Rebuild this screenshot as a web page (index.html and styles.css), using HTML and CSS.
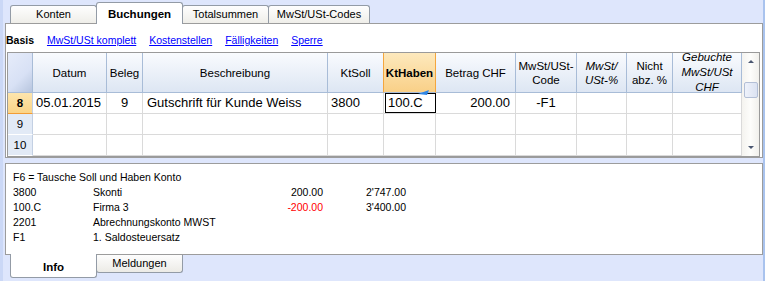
FILE: index.html
```html
<!DOCTYPE html>
<html lang="de">
<head>
    <meta charset="UTF-8">
    <title>Buchungen</title>
    <link rel="stylesheet" href="styles.css">
</head>
<body>
<div class="window">
    <div class="tabs-top">
        <div class="tab">Konten</div>
        <div class="tab active">Buchungen</div>
        <div class="tab">Totalsummen</div>
        <div class="tab wide">MwSt/USt-Codes</div>
    </div>

    <div class="panel main">
        <div class="views">
            <b>Basis</b>
            <a href="#">MwSt/USt komplett</a>
            <a href="#">Kostenstellen</a>
            <a href="#">Fälligkeiten</a>
            <a href="#">Sperre</a>
        </div>
        <div class="grid">
            <table>
                <colgroup>
                    <col class="c-num">
                    <col class="c-datum">
                    <col class="c-beleg">
                    <col class="c-beschr">
                    <col class="c-soll">
                    <col class="c-haben">
                    <col class="c-betrag">
                    <col class="c-code">
                    <col class="c-proz">
                    <col class="c-nicht">
                    <col class="c-gebucht">
                </colgroup>
                <thead>
                    <tr>
                        <th class="corner"><div class="hdr"></div></th>
                        <th><div class="hdr">Datum</div></th>
                        <th><div class="hdr">Beleg</div></th>
                        <th><div class="hdr">Beschreibung</div></th>
                        <th class="before-current"><div class="hdr">KtSoll</div></th>
                        <th class="current"><div class="hdr">KtHaben</div></th>
                        <th><div class="hdr">Betrag CHF</div></th>
                        <th><div class="hdr">MwSt/USt-<br>Code</div></th>
                        <th><div class="hdr italic">MwSt/<br>USt-%</div></th>
                        <th><div class="hdr">Nicht<br>abz. %</div></th>
                        <th><div class="hdr italic tall">Gebuchte<br>MwSt/USt<br>CHF</div></th>
                    </tr>
                </thead>
                <tbody>
                    <tr>
                        <td class="num selected">8</td>
                        <td>05.01.2015</td>
                        <td class="center">9</td>
                        <td class="wide-pad">Gutschrift für Kunde Weiss</td>
                        <td>3800</td>
                        <td class="edit"><div class="editor">100.C<svg class="hint" width="12" height="5" viewBox="0 0 12 5"><polygon points="0,4 11,0 9,5" fill="#2d86e6"/></svg></div></td>
                        <td class="right">200.00</td>
                        <td class="center">-F1</td>
                        <td></td>
                        <td></td>
                        <td></td>
                    </tr>
                    <tr>
                        <td class="num">9</td>
                        <td></td><td></td><td></td><td></td><td></td><td></td><td></td><td></td><td></td><td></td>
                    </tr>
                    <tr>
                        <td class="num">10</td>
                        <td></td><td></td><td></td><td></td><td></td><td></td><td></td><td></td><td></td><td></td>
                    </tr>
                </tbody>
            </table>
            <div class="vscroll">
                <div class="sb-btn"><span class="arrow-up"></span></div>
                <div class="sb-track"><div class="sb-thumb"></div></div>
                <div class="sb-btn"><span class="arrow-down"></span></div>
            </div>
        </div>
    </div>

    <div class="panel info">
        <div class="info-line full">F6 = Tausche Soll und Haben Konto</div>
        <div class="info-row">
            <span>3800</span><span>Skonti</span><span class="amt">200.00</span><span class="amt">2'747.00</span>
        </div>
        <div class="info-row">
            <span>100.C</span><span>Firma 3</span><span class="amt neg">-200.00</span><span class="amt">3'400.00</span>
        </div>
        <div class="info-row">
            <span>2201</span><span>Abrechnungskonto MWST</span><span></span><span></span>
        </div>
        <div class="info-row">
            <span>F1</span><span>1. Saldosteuersatz</span><span></span><span></span>
        </div>
    </div>

    <div class="tabs-bottom">
        <div class="btab active">Info</div>
        <div class="btab">Meldungen</div>
    </div>
</div>
</body>
</html>
```

FILE: styles.css
```css
body {
    margin: 0;
    background-color: #dee6fc;
    font-family: "Liberation Sans", Arial, sans-serif;
    font-size: 10.5px;
    color: #000;
}
.window {
    width: 765px;
    height: 281px;
    box-sizing: border-box;
    border-left: 3px solid #cbd8f6;
    border-right: 2px solid #a9c3ee;
    padding-left: 2px;
    overflow: hidden;
}

/* top tabs */
.tabs-top {
    display: flex;
    align-items: flex-end;
    height: 23px;
    padding-left: 5px;
    position: relative;
    z-index: 2;
}
.tab {
    width: 87px;
    height: 18px;
    box-sizing: border-box;
    margin-right: -1px;
    border: 1px solid #939ba6;
    border-bottom: none;
    border-radius: 3px 3px 0 0;
    background: linear-gradient(#fefefe, #efeee9);
    font-size: 11px;
    line-height: 17px;
    text-align: center;
}
.tab.wide {
    width: 102px;
}
.tab.active {
    height: 22px;
    margin-bottom: -1px;
    background: #fff;
    font-weight: bold;
    font-size: 11.5px;
    line-height: 23px;
    position: relative;
    z-index: 1;
}

/* panels */
.panel {
    width: 758px;
    box-sizing: border-box;
    border: 1px solid #9c9c9c;
    background-color: #fff;
}
.main {
    height: 135px;
}
.views {
    height: 28px;
    box-sizing: border-box;
    padding-top: 10px;
    line-height: 13px;
    white-space: nowrap;
}
.views a {
    color: #0000ff;
    margin-left: 10px;
}

/* grid */
.grid {
    display: flex;
    margin-left: 1px;
    width: 753px;
    height: 105px;
    box-sizing: border-box;
    border: 1px solid #9a9a9a;
    overflow: hidden;
}
table {
    width: 734px;
    flex: none;
    table-layout: fixed;
    border-collapse: separate;
    border-spacing: 0;
}
.c-num { width: 25px; }
.c-datum { width: 74px; }
.c-beleg { width: 36px; }
.c-beschr { width: 185px; }
.c-soll { width: 56px; }
.c-haben { width: 52px; }
.c-betrag { width: 80px; }
.c-code { width: 61px; }
.c-proz { width: 50px; }
.c-nicht { width: 46px; }
.c-gebucht { width: 69px; }

thead tr {
    height: 40px;
}
tbody tr {
    height: 21px;
}
th {
    padding: 0;
    font-weight: normal;
    font-size: 11.5px;
    line-height: 14px;
    border-right: 1px solid #a8bcd7;
    border-bottom: 1px solid #a8bcd7;
    background: linear-gradient(#f9fbfe, #dde6f3);
}
.hdr {
    height: 39px;
    display: flex;
    align-items: center;
    justify-content: center;
    text-align: center;
    overflow: hidden;
    white-space: nowrap;
}
.hdr.tall {
    line-height: 15px;
}
.italic {
    font-style: italic;
}
th.corner {
    background: linear-gradient(135deg, #e6ecfa 0%, #d8e1f5 60%, #b7c5de 100%);
}
th.before-current {
    border-right-color: #f4a63e;
}
th.current {
    font-weight: bold;
    border-right-color: #f4a63e;
    background: linear-gradient(#fde9bd, #f9d088);
}
td {
    padding: 0 3px;
    font-size: 13px;
    line-height: 20px;
    white-space: nowrap;
    overflow: hidden;
    border-right: 1px solid #dadada;
    border-bottom: 1px solid #dadada;
}
td.wide-pad {
    padding-left: 4px;
}
td.center {
    text-align: center;
}
td.right {
    text-align: right;
    padding-right: 5px;
}
td.num {
    padding: 0;
    text-align: center;
    font-size: 11.5px;
    background-color: #e2eaf6;
    border-right-color: #c3d0e3;
    border-bottom-color: #fff;
}
td.num.selected {
    font-weight: bold;
    background: linear-gradient(#fde5ad, #fbd487);
    border-bottom-color: #f29c35;
}
td.edit {
    padding: 0 0 0 1px;
    overflow: visible;
}
.editor {
    position: relative;
    width: 51px;
    height: 20px;
    box-sizing: border-box;
    border: 1px solid #000;
    padding-left: 2px;
    line-height: 18px;
}
.hint {
    position: absolute;
    top: -4px;
    right: 5px;
}

/* scrollbar */
.vscroll {
    width: 17px;
    flex: none;
    display: flex;
    flex-direction: column;
    background: linear-gradient(90deg, #f4f3ef, #fdfdfb 50%, #f1f0ec);
}
.sb-btn {
    height: 17px;
    display: flex;
    align-items: center;
    justify-content: center;
}
.arrow-up {
    border-left: 3px solid transparent;
    border-right: 3px solid transparent;
    border-bottom: 3px solid #4a5670;
}
.arrow-down {
    border-left: 3px solid transparent;
    border-right: 3px solid transparent;
    border-top: 3px solid #4a5670;
}
.sb-track {
    flex: 1;
}
.sb-thumb {
    margin: 12px 1px 0 2px;
    height: 16px;
    box-sizing: border-box;
    border: 1px solid #b3bfd6;
    border-radius: 2px;
    background: linear-gradient(90deg, #eef2fb, #dbe2f1);
}

/* info panel */
.info {
    margin-top: 5px;
    height: 92px;
    padding: 6px 0 0 7px;
    line-height: 15px;
}
.info-row {
    display: grid;
    grid-template-columns: 80px 160px 70px 83px;
    white-space: nowrap;
}
.amt {
    text-align: right;
}
.neg {
    color: #ff0000;
}

/* bottom tabs */
.tabs-bottom {
    display: flex;
    padding-left: 5px;
    margin-top: -1px;
    position: relative;
}
.btab {
    width: 87px;
    height: 18px;
    box-sizing: border-box;
    margin-top: 1px;
    margin-right: -1px;
    border: 1px solid #939ba6;
    border-top: none;
    border-radius: 0 0 3px 3px;
    background: linear-gradient(#fdfdfd, #ecebe6);
    font-size: 11px;
    line-height: 16px;
    text-align: center;
}
.btab.active {
    height: 24px;
    margin-top: 0;
    background: #fff;
    font-weight: bold;
    font-size: 11.5px;
    line-height: 27px;
    position: relative;
    z-index: 1;
}
```
